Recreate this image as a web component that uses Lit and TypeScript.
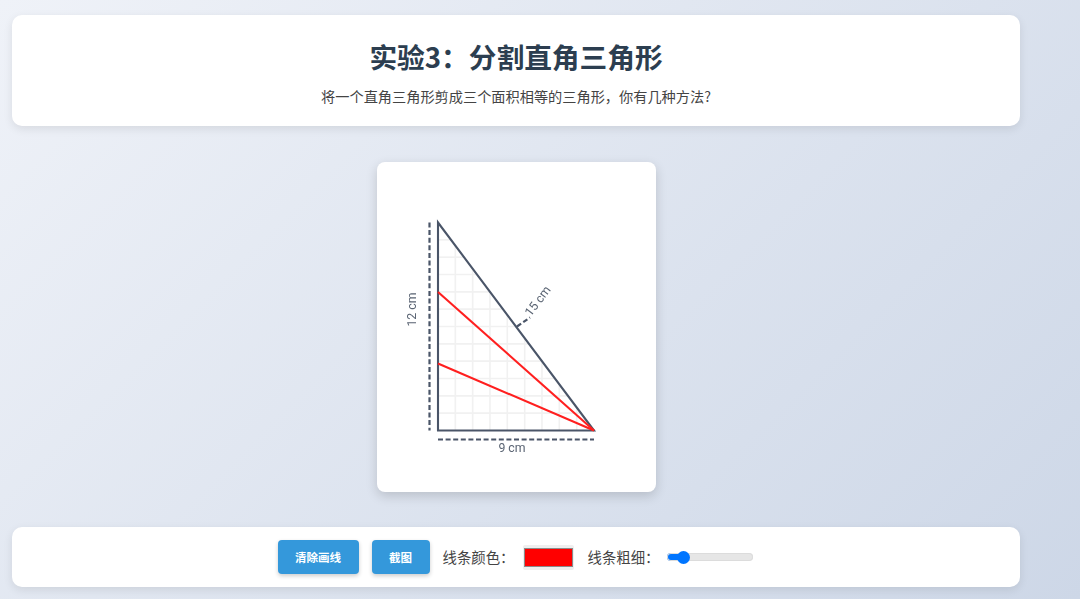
import { LitElement, html, css, svg } from "lit";
import { customElement } from "lit/decorators.js";

const X0 = 61, Y0 = 60, S = 156 / 9, H = 208;

const gridLines = () => {
  const out = [];
  for (let i = 1; i < 9; i++) {
    const x = X0 + i * S;
    out.push(svg`<line class="grid" x1=${x} y1=${Y0 + (i * S * 4) / 3} x2=${x} y2=${Y0 + H}></line>`);
  }
  for (let j = 1; j < 12; j++) {
    const y = Y0 + j * S;
    out.push(svg`<line class="grid" x1=${X0} y1=${y} x2=${X0 + (j * S * 3) / 4} y2=${y}></line>`);
  }
  return out;
};

@customElement("app-root")
export class AppRoot extends LitElement {
  static styles = css`
    :host {
      display: block;
      width: 1080px;
      height: 599px;
      overflow: hidden;
      background: linear-gradient(135deg, #eff2f8 0%, #cdd7e7 100%);
      font-family: "Noto Sans CJK SC", sans-serif;
      color: #333;
    }
    .page {
      box-sizing: border-box;
      width: 1032px;
      padding: 15px 12px 0;
      display: flex;
      flex-direction: column;
      align-items: stretch;
    }
    .header {
      height: 110.5px;
      box-sizing: border-box;
      background: #fff;
      border-radius: 10px;
      box-shadow: 0 3px 10px rgba(0, 0, 0, 0.09);
      text-align: center;
      padding-top: 23px;
    }
    h1 {
      margin: 0;
      font-size: 27.7px;
      line-height: 36px;
      font-weight: 700;
      color: #2c3e50;
    }
    .sub {
      margin: 12px 0 0;
      font-size: 14.2px;
      line-height: 20px;
      color: #444;
    }
    .stage {
      display: flex;
      justify-content: center;
      padding: 36px 0 35.5px;
    }
    .card {
      width: 279px;
      height: 330px;
      background: #fff;
      border-radius: 8px;
      box-shadow: 0 4px 12px rgba(0, 0, 0, 0.16);
    }
    .card svg { display: block; filter: blur(0.35px); }
    .grid { stroke: #f1f1f1; stroke-width: 1.6; }
    .tri { fill: none; stroke: #4a5568; stroke-width: 2.1; stroke-linejoin: miter; }
    .dash { stroke: #4a5568; stroke-width: 2.2; stroke-dasharray: 5 2.6; fill: none; }
    .red { stroke: #ff1f1f; stroke-width: 2.1; }
    .lbl { font: 12.3px Roboto, "Liberation Sans", sans-serif; fill: #5a6473; }
    .controls {
      height: 60px;
      box-sizing: border-box;
      padding-right: 1px;
      background: #fff;
      border-radius: 10px;
      box-shadow: 0 3px 10px rgba(0, 0, 0, 0.09);
      display: flex;
      align-items: center;
      justify-content: center;
      font-size: 14.4px;
      color: #444;
    }
    .controls span { margin-top: -2px; }
    button {
      height: 34px;
      border: none;
      border-radius: 4px;
      background: #3498db;
      color: #fff;
      font: 700 11.5px "Noto Sans CJK SC", sans-serif;
      box-shadow: 0 2px 4px rgba(0, 0, 0, 0.2);
      padding: 0;
    }
    .b1 { width: 81px; margin-right: 13px; }
    .b2 { width: 58px; margin-right: 13px; }
    .color {
      -webkit-appearance: none;
      appearance: none;
      width: 51px;
      height: 25px;
      padding: 0;
      margin: 0 14px 0 8px;
      border: none;
      border-radius: 2px;
      background: #efefef;
      display: block;
    }
    .color::-webkit-color-swatch-wrapper { padding: 3px 1px; }
    .color::-webkit-color-swatch { border: 1px solid #8a8a8a; border-radius: 0; }
    .range {
      -webkit-appearance: none;
      appearance: none;
      width: 86px;
      height: 8px;
      margin: 0 0 0 8px;
      display: block;
      border-radius: 4px;
      background: linear-gradient(to right, #0075ff 0 16px, #e6e6e6 16px);
      box-shadow: inset 0 0 0 1px #dcdcdc;
    }
    .range::-webkit-slider-thumb {
      -webkit-appearance: none;
      appearance: none;
      width: 13px;
      height: 13px;
      border-radius: 50%;
      background: #0075ff;
    }
  `;

  render() {
    return html`
      <div class="page">
        <header class="header">
          <h1>实验3：分割直角三角形</h1>
          <p class="sub">将一个直角三角形剪成三个面积相等的三角形，你有几种方法?</p>
        </header>
        <div class="stage">
          <div class="card">
            <svg width="279" height="330" viewBox="0 -0.5 279 330">
              ${gridLines()}
              <line class="dash" x1="52.5" y1="60" x2="52.5" y2="268"></line>
              <line class="dash" x1="61" y1="277" x2="217" y2="277"></line>
              <line class="dash" x1="140" y1="164" x2="153" y2="155"></line>
              <polygon class="tri" points="61,60 61,268 217,268"></polygon>
              <line class="red" x1="61" y1="129.5" x2="217" y2="268"></line>
              <line class="red" x1="61" y1="201" x2="217" y2="268"></line>
              <text class="lbl" x="135" y="289.5" text-anchor="middle">9 cm</text>
              <text class="lbl" text-anchor="middle" transform="translate(39 147) rotate(-90)">12 cm</text>
              <text class="lbl" text-anchor="middle" transform="translate(164 141) rotate(-53)">15 cm</text>
            </svg>
          </div>
        </div>
        <section class="controls">
          <button class="b1">清除画线</button>
          <button class="b2">截图</button>
          <span>线条颜色：</span>
          <input class="color" type="color" value="#ff0000" />
          <span>线条粗细：</span>
          <input class="range" type="range" min="1" max="20" step="0.1" value="3.4" />
        </section>
      </div>
    `;
  }
}
